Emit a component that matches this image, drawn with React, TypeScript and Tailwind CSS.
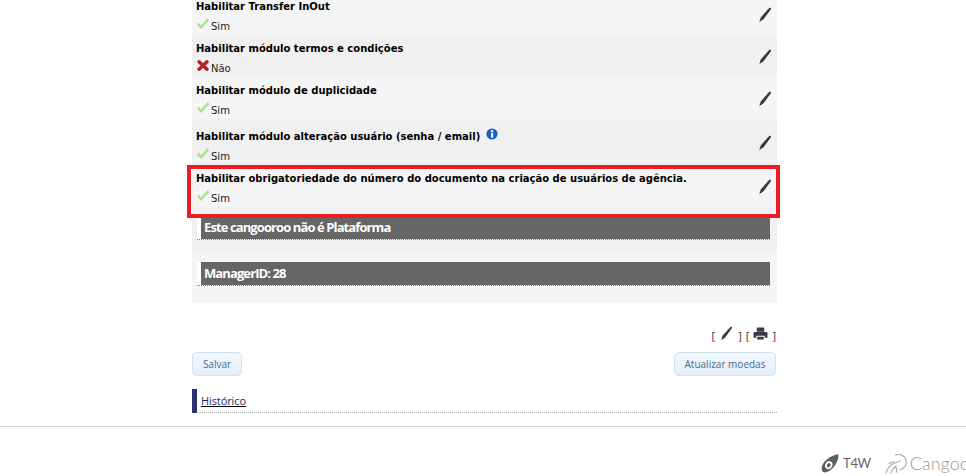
const Pencil = ({ className = "" }: { className?: string }) => (
  <svg viewBox="0 0 14 16" className={className}>
    <path d="M12.6 0.8c0.5 0.3 0.6 0.8 0.3 1.4L5.6 12.2 2.2 14.6 1.2 15.4l0.5-1.3 1-3.6L10.9 1.2c0.4-0.5 1-0.7 1.7-0.4z" fill="#3a3a46" />
  </svg>
);

const Check = () => (
  <svg viewBox="0 0 12 11" className="w-[12px] h-[11px] ml-[1px] mr-[2px] -mt-[2px]">
    <path d="M0.8 5.6l3.2 3.6L11.4 1" fill="none" stroke="#a3e583" strokeWidth="2.4" />
  </svg>
);

const Cross = () => (
  <svg viewBox="0 0 12 11" className="w-[12px] h-[11px] ml-[1px] mr-[2px] -mt-[2px]">
    <path d="M2 1.8l8 7.4M10 1.8l-8 7.4" fill="none" stroke="#b5222a" strokeWidth="3.4" strokeLinecap="round" />
  </svg>
);

const Info = () => (
  <svg viewBox="0 0 12 12" className="w-[12px] h-[12px] mb-[4px]">
    <circle cx="6" cy="6" r="5.6" fill="#1c5fc4" />
    <rect x="5" y="5" width="2.2" height="4.6" fill="#fff" />
    <rect x="5" y="2.2" width="2.2" height="1.9" fill="#fff" />
  </svg>
);

const Printer = () => (
  <svg viewBox="0 0 16 14" className="w-[15px] h-[13px] mb-[3px]">
    <path d="M4 0.5h8v4.5H4zM1.5 5.5h13c0.6 0 1 0.4 1 1v5h-3V9.5H3.5v2H0.5V6.5c0-0.6 0.4-1 1-1z" fill="#3a3a44" />
    <rect x="4.5" y="10.5" width="7" height="3" fill="#3a3a44" />
  </svg>
);

interface OptionRow {
  label: string;
  enabled: boolean;
  info?: boolean;
  bg: string;
}

const rows: OptionRow[] = [
  { label: "Habilitar Transfer InOut", enabled: true, bg: "bg-[#f5f5f5]" },
  { label: "Habilitar módulo termos e condições", enabled: false, bg: "bg-[#f0f0f0]" },
  { label: "Habilitar módulo de duplicidade", enabled: true, bg: "bg-[#f5f5f5]" },
  { label: "Habilitar módulo alteração usuário (senha / email)", enabled: true, info: true, bg: "bg-[#f0f0f0]" },
  { label: "Habilitar obrigatoriedade do número do documento na criação de usuários de agência.", enabled: true, bg: "bg-[#f5f5f5]" },
];

function Row({ row }: { row: OptionRow }) {
  return (
    <div className={`${row.info ? "h-[46px] pt-[9px]" : "h-[42px] pt-[7px]"} ${row.bg} flex justify-between pl-[4px] pr-[5px]`}>
      <div>
        <div className="flex items-end gap-[6px] font-['DejaVu_Sans',sans-serif] font-bold text-[10px] leading-[14px] text-black">
          {row.label}
          {row.info && <Info />}
        </div>
        <div className="flex items-start mt-[6px] font-['DejaVu_Sans',sans-serif] text-[10px] leading-[13px] text-[#222]">
          {row.enabled ? <Check /> : <Cross />}
          {row.enabled ? "Sim" : "Não"}
        </div>
      </div>
      <Pencil className="w-[14px] h-[16px] mt-[7px]" />
    </div>
  );
}

function Band({ text, bg, height }: { text: string; bg: string; height: string }) {
  return (
    <div className={`${bg} ${height} pt-[9px] pl-[5px] pr-[7px]`}>
      <div className="bg-white pl-[4px] border-b border-dotted border-[#777]">
        <div className="h-[23px] bg-[#666] pl-[3px] font-['Open_Sans',sans-serif] font-bold text-[13px] leading-[23px] tracking-[-0.9px] text-white">
          {text}
        </div>
      </div>
    </div>
  );
}

const buttonClass =
  "h-[24px] rounded-[5px] border border-[#cfe2f3] bg-gradient-to-b from-[#f2f8fd] to-[#e2eff9] font-['Open_Sans',sans-serif] text-[10px] text-[#4a6a8c]";

export default function App() {
  return (
    <div className="w-[966px] h-[476px] overflow-hidden bg-white">
      <div className="relative w-[585px] ml-[192px] -mt-[7px]">
        {rows.map((row) => (
          <Row key={row.label} row={row} />
        ))}
        <Band text="Este cangooroo não é Plataforma" bg="bg-[#f0f0f0]" height="h-[46px]" />
        <Band text="ManagerID: 28" bg="bg-[#f5f5f5]" height="h-[50px]" />

        <div className="flex justify-end items-end gap-[4px] h-[26px] mt-[14px] pr-[1px] font-['Open_Sans',sans-serif] text-[11px] leading-[14px] text-[#333]">
          <span className="flex items-end gap-[5px]">[ <Pencil className="w-[13px] h-[15px] mb-[2px]" /> ]</span>
          <span className="flex items-end gap-[4px]">[ <Printer /> ]</span>
        </div>

        <div className="flex justify-between mt-[9px] pr-[1px]">
          <button className={`${buttonClass} w-[50px]`}>Salvar</button>
          <button className={`${buttonClass} w-[102px]`}>Atualizar moedas</button>
        </div>

        <div className="flex h-[24px] mt-[13px] border-b border-dotted border-[#aaa]">
          <div className="w-[5px] h-[24px] bg-[#2b3175]" />
          <a className="ml-[4px] mt-[4px] font-['Open_Sans',sans-serif] text-[11px] leading-[16px] tracking-[-0.1px] text-[#1f2a6b] underline decoration-black">Histórico</a>
        </div>

        {/* highlight drawn over the last option row */}
        <div className="absolute -left-[5px] top-[172px] w-[593px] h-[53px] border-[4px] border-[#ed1c24]" />
      </div>

      <div className="border-t border-[#ccc] mt-[13px] flex justify-end pt-[23px] overflow-hidden">
        <div className="flex items-center w-[146px] shrink-0 font-['Lato',sans-serif] text-[#666] whitespace-nowrap">
          <svg viewBox="0 0 24 24" className="w-[20px] h-[21px] shrink-0">
            <path d="M22 1c1 5-3 15-11 20-5 3-9 2-9-3C2 10 13 2 22 1z" fill="#5e5e5e" />
            <ellipse cx="10.5" cy="14" rx="4.2" ry="5" fill="#fff" transform="rotate(30 10.5 14)" />
            <ellipse cx="10.5" cy="14" rx="2" ry="2.8" fill="#5e5e5e" transform="rotate(30 10.5 14)" />
          </svg>
          <span className="ml-[3px] text-[13px] tracking-[-0.3px]">T4W</span>
          <svg viewBox="0 0 26 24" className="ml-[13px] w-[24px] h-[22px] shrink-0" fill="none" stroke="#a5a5a5" strokeWidth="1.1">
            <path d="M12 2.5c5-2 11 0 12 6s-4 9-7 10M2 22.5c1.5-5 4-9 8-11 3-1.5 6-1 8-3.5M7 22.5c1-3 3-6 6-8l1 7M5 12c2-1.5 4-2.5 6-2.5" />
          </svg>
          <span className="ml-[2px] text-[18px] font-light text-[#999]">Cangooroo</span>
        </div>
      </div>
    </div>
  );
}
